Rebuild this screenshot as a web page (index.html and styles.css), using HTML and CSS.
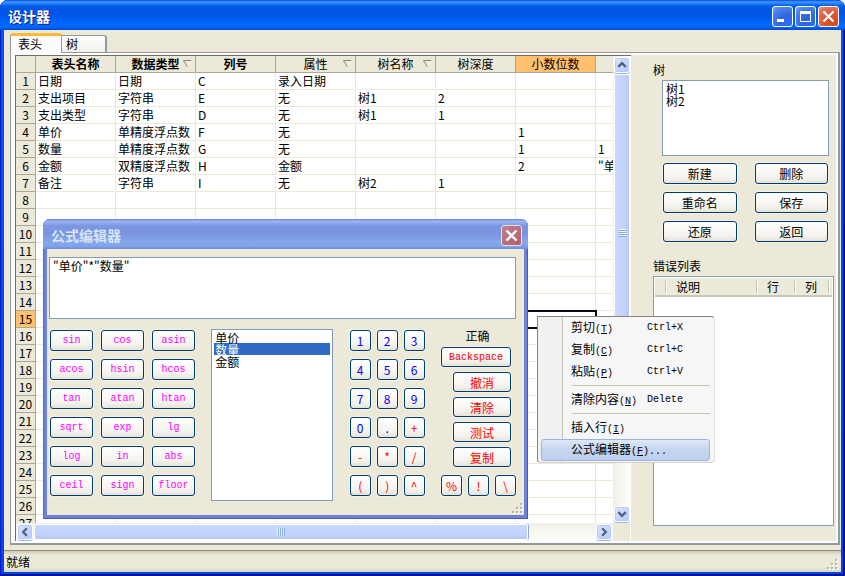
FILE: index.html
```html
<!DOCTYPE html>
<html lang="zh-CN">
<head>
<meta charset="utf-8">
<title>设计器</title>
<link rel="stylesheet" href="styles.css">
</head>
<body>
<main class="window">
  <header class="titlebar">
    <h1 class="caption">设计器</h1>
    <button class="cap-btn" type="button" aria-label="最小化"><svg viewBox="0 0 19 19"><path d="M4 12h7v3H4z" fill="#fff"/></svg></button>
    <button class="cap-btn" type="button" aria-label="最大化"><svg viewBox="0 0 19 19"><path d="M4 4h11v11H4zM5 7v7h9V7z" fill="#fff" fill-rule="evenodd"/></svg></button>
    <button class="cap-btn cap-close" type="button" aria-label="关闭"><svg viewBox="0 0 19 19"><path d="M4.500 4.500l10 10M14.500 4.500l-10 10" stroke="#fff" stroke-width="2.200"/></svg></button>
  </header>

  <div class="client">
    <div class="tabs" role="tablist">
      <button class="tab tab-active" type="button" role="tab" aria-selected="true">表头</button>
      <button class="tab" type="button" role="tab" aria-selected="false">树</button>
    </div>
    <div class="panel">
      <section class="sheet">
        <div class="sheet-main">
          <div class="sheet-view">
            <table class="grid" id="grid">
              <colgroup><col class="col-no"><col><col><col><col><col><col><col><col></colgroup>
              <thead>
                <tr>
                  <th></th>
                  <th class="strong">表头名称</th>
                  <th class="strong"><div class="head"><span>数据类型</span><svg class="filter" viewBox="0 0 9 8"><path d="M8.500.5L4.500 7" stroke="#fff" fill="none"/><path d="M4.500 7L.5.5h8" stroke="#8e8b7c" fill="none"/></svg></div></th>
                  <th class="strong">列号</th>
                  <th><div class="head"><span>属性</span><svg class="filter" viewBox="0 0 9 8"><path d="M8.500.5L4.500 7" stroke="#fff" fill="none"/><path d="M4.500 7L.5.5h8" stroke="#8e8b7c" fill="none"/></svg></div></th>
                  <th><div class="head"><span>树名称</span><svg class="filter" viewBox="0 0 9 8"><path d="M8.500.5L4.500 7" stroke="#fff" fill="none"/><path d="M4.500 7L.5.5h8" stroke="#8e8b7c" fill="none"/></svg></div></th>
                  <th>树深度</th>
                  <th class="hot">小数位数</th>
                  <th></th>
                </tr>
              </thead>
              <tbody>
                <tr><th>1</th><td>日期</td><td>日期</td><td>C</td><td>录入日期</td><td></td><td></td><td></td><td></td></tr>
                <tr><th>2</th><td>支出项目</td><td>字符串</td><td>E</td><td>无</td><td>树1</td><td>2</td><td></td><td></td></tr>
                <tr><th>3</th><td>支出类型</td><td>字符串</td><td>D</td><td>无</td><td>树1</td><td>1</td><td></td><td></td></tr>
                <tr><th>4</th><td>单价</td><td>单精度浮点数</td><td>F</td><td>无</td><td></td><td></td><td>1</td><td></td></tr>
                <tr><th>5</th><td>数量</td><td>单精度浮点数</td><td>G</td><td>无</td><td></td><td></td><td>1</td><td>1</td></tr>
                <tr><th>6</th><td>金额</td><td>双精度浮点数</td><td>H</td><td>金额</td><td></td><td></td><td>2</td><td>"单价"*"数量"</td></tr>
                <tr><th>7</th><td>备注</td><td>字符串</td><td>I</td><td>无</td><td>树2</td><td>1</td><td></td><td></td></tr>
                <tr><th>8</th><td></td><td></td><td></td><td></td><td></td><td></td><td></td><td></td></tr>
                <tr><th>9</th><td></td><td></td><td></td><td></td><td></td><td></td><td></td><td></td></tr>
                <tr><th>10</th><td></td><td></td><td></td><td></td><td></td><td></td><td></td><td></td></tr>
                <tr><th>11</th><td></td><td></td><td></td><td></td><td></td><td></td><td></td><td></td></tr>
                <tr><th>12</th><td></td><td></td><td></td><td></td><td></td><td></td><td></td><td></td></tr>
                <tr><th>13</th><td></td><td></td><td></td><td></td><td></td><td></td><td></td><td></td></tr>
                <tr><th>14</th><td></td><td></td><td></td><td></td><td></td><td></td><td></td><td></td></tr>
                <tr><th class="hot">15</th><td></td><td></td><td></td><td></td><td></td><td></td><td class="current"></td><td></td></tr>
                <tr><th>16</th><td></td><td></td><td></td><td></td><td></td><td></td><td></td><td></td></tr>
                <tr><th>17</th><td></td><td></td><td></td><td></td><td></td><td></td><td></td><td></td></tr>
                <tr><th>18</th><td></td><td></td><td></td><td></td><td></td><td></td><td></td><td></td></tr>
                <tr><th>19</th><td></td><td></td><td></td><td></td><td></td><td></td><td></td><td></td></tr>
                <tr><th>20</th><td></td><td></td><td></td><td></td><td></td><td></td><td></td><td></td></tr>
                <tr><th>21</th><td></td><td></td><td></td><td></td><td></td><td></td><td></td><td></td></tr>
                <tr><th>22</th><td></td><td></td><td></td><td></td><td></td><td></td><td></td><td></td></tr>
                <tr><th>23</th><td></td><td></td><td></td><td></td><td></td><td></td><td></td><td></td></tr>
                <tr><th>24</th><td></td><td></td><td></td><td></td><td></td><td></td><td></td><td></td></tr>
                <tr><th>25</th><td></td><td></td><td></td><td></td><td></td><td></td><td></td><td></td></tr>
                <tr><th>26</th><td></td><td></td><td></td><td></td><td></td><td></td><td></td><td></td></tr>
                <tr><th>27</th><td></td><td></td><td></td><td></td><td></td><td></td><td></td><td></td></tr>
              </tbody>
            </table>
          </div>
          <div class="bar bar-v">
            <button class="arrow" type="button" aria-label="向上滚动"><svg viewBox="0 0 15 15"><path d="M3.500 9.500l4-4 4 4" /></svg></button>
            <div class="track"><div class="thumb"><i class="ridge"></i></div></div>
            <button class="arrow" type="button" aria-label="向下滚动"><svg viewBox="0 0 15 15"><path d="M3.500 5.500l4 4 4-4" /></svg></button>
          </div>
        </div>
        <div class="sheet-foot">
          <div class="bar bar-h">
            <button class="arrow" type="button" aria-label="向左滚动"><svg viewBox="0 0 15 15"><path d="M9.500 3.500l-4 4 4 4" /></svg></button>
            <div class="track"><div class="thumb"><i class="ridge"></i></div></div>
            <button class="arrow" type="button" aria-label="向右滚动"><svg viewBox="0 0 15 15"><path d="M5.500 3.500l4 4-4 4" /></svg></button>
          </div>
          <div class="corner"></div>
        </div>
      </section>

      <aside class="side">
        <label class="side-label" for="trees">树</label>
        <select class="listbox tree-list" id="trees" size="4"><option>树1</option><option>树2</option></select>
        <div class="side-buttons">
          <button class="btn" type="button">新建</button>
          <button class="btn" type="button">删除</button>
          <button class="btn" type="button">重命名</button>
          <button class="btn" type="button">保存</button>
          <button class="btn" type="button">还原</button>
          <button class="btn" type="button">返回</button>
        </div>
        <h2 class="side-label" id="errors">错误列表</h2>
        <div class="errors">
          <table class="error-table" aria-labelledby="errors">
            <thead><tr><th class="c-icon"></th><th class="c-desc">说明</th><th class="c-line">行</th><th class="c-line">列</th><th></th></tr></thead>
          </table>
        </div>
      </aside>
    </div>
  </div>

  <footer class="status">
    <span>就绪</span>
    <svg class="grip" viewBox="0 0 12 12"><path d="M9 1h2v2H9zM5 5h2v2H5zM9 5h2v2H9zM1 9h2v2H1zM5 9h2v2H5zM9 9h2v2H9z" fill="#fff"/><path d="M8 0h2v2H8zM4 4h2v2H4zM8 4h2v2H8zM0 8h2v2H0zM4 8h2v2H4zM8 8h2v2H8z" fill="#b8b4a2"/></svg>
  </footer>

  <section class="dialog" role="dialog" aria-labelledby="dlg-title">
    <header class="dlg-title">
      <h2 class="caption" id="dlg-title">公式编辑器</h2>
      <button class="cap-btn dlg-close" type="button" aria-label="关闭"><svg viewBox="0 0 19 19"><path d="M4.500 4.500l10 10M14.500 4.500l-10 10" stroke="#fff" stroke-width="2.400"/></svg></button>
    </header>
    <div class="dlg-body">
      <textarea class="formula" aria-label="公式" spellcheck="false">"单价"*"数量"</textarea>
      <div class="dlg-cols">
        <div class="keys keys-fn">
          <button class="btn fn" type="button">sin</button><button class="btn fn" type="button">cos</button><button class="btn fn" type="button">asin</button>
          <button class="btn fn" type="button">acos</button><button class="btn fn" type="button">hsin</button><button class="btn fn" type="button">hcos</button>
          <button class="btn fn" type="button">tan</button><button class="btn fn" type="button">atan</button><button class="btn fn" type="button">htan</button>
          <button class="btn fn" type="button">sqrt</button><button class="btn fn" type="button">exp</button><button class="btn fn" type="button">lg</button>
          <button class="btn fn" type="button">log</button><button class="btn fn" type="button">in</button><button class="btn fn" type="button">abs</button>
          <button class="btn fn" type="button">ceil</button><button class="btn fn" type="button">sign</button><button class="btn fn" type="button">floor</button>
        </div>
        <select class="listbox field-list" size="6" aria-label="字段"><option>单价</option><option selected>数量</option><option>金额</option></select>
        <div class="keys keys-num">
          <button class="btn num" type="button">1</button><button class="btn num" type="button">2</button><button class="btn num" type="button">3</button>
          <button class="btn num" type="button">4</button><button class="btn num" type="button">5</button><button class="btn num" type="button">6</button>
          <button class="btn num" type="button">7</button><button class="btn num" type="button">8</button><button class="btn num" type="button">9</button>
          <button class="btn num" type="button">0</button><button class="btn num" type="button">.</button><button class="btn op" type="button">+</button>
          <button class="btn op" type="button">-</button><button class="btn op" type="button">*</button><button class="btn op" type="button">/</button>
          <button class="btn op" type="button">(</button><button class="btn op" type="button">)</button><button class="btn op" type="button">^</button>
        </div>
        <div class="actions">
          <div class="stack">
            <output class="check">正确</output>
            <button class="btn op wide mono" type="button">Backspace</button>
            <button class="btn op" type="button">撤消</button>
            <button class="btn op" type="button">清除</button>
            <button class="btn op" type="button">测试</button>
            <button class="btn op" type="button">复制</button>
          </div>
          <div class="keys keys-num">
            <button class="btn op" type="button">%</button><button class="btn op" type="button">!</button><button class="btn op" type="button">\</button>
          </div>
        </div>
      </div>
      <svg class="grip dlg-grip" viewBox="0 0 12 12"><path d="M9 1h2v2H9zM5 5h2v2H5zM9 5h2v2H9zM1 9h2v2H1zM5 9h2v2H5zM9 9h2v2H9z" fill="#fff"/><path d="M8 0h2v2H8zM4 4h2v2H4zM8 4h2v2H8zM0 8h2v2H0zM4 8h2v2H4zM8 8h2v2H8z" fill="#b8b4a2"/></svg>
    </div>
  </section>

  <div class="menu" role="menu">
    <button class="item" type="button" role="menuitem"><span>剪切<span class="key">(<u>T</u>)</span></span><kbd>Ctrl+X</kbd></button>
    <button class="item" type="button" role="menuitem"><span>复制<span class="key">(<u>C</u>)</span></span><kbd>Ctrl+C</kbd></button>
    <button class="item" type="button" role="menuitem"><span>粘贴<span class="key">(<u>P</u>)</span></span><kbd>Ctrl+V</kbd></button>
    <hr class="sep">
    <button class="item" type="button" role="menuitem"><span>清除内容<span class="key">(<u>N</u>)</span></span><kbd>Delete</kbd></button>
    <hr class="sep">
    <button class="item" type="button" role="menuitem"><span>插入行<span class="key">(<u>I</u>)</span></span></button>
    <button class="item item-on" type="button" role="menuitem"><span>公式编辑器<span class="key">(<u>F</u>)...</span></span></button>
  </div>
</main>
</body>
</html>
```
FILE: styles.css
```css
* { box-sizing: border-box; }

body {
  margin: 0;
  background: #fff;
  color: #000;
  font: 12px/16px "Noto Sans CJK SC", sans-serif;
}

button, select, textarea { font: inherit; color: inherit; margin: 0; }
h1, h2 { margin: 0; font-weight: normal; font-size: 12px; }
svg { display: block; }

/* main window */
.window {
  position: relative;
  display: flex;
  flex-direction: column;
  height: 100vh;
  padding: 0 4px 4px;
  overflow: hidden;
  border-radius: 8px 8px 0 0;
  background: linear-gradient(#0058ee, #0046e0);
  box-shadow: inset 1px 0 #0019cf, inset -2px 0 #00138c, inset 0 -2px #001690;
}

.titlebar {
  display: flex;
  flex: none;
  align-items: center;
  gap: 2px;
  height: 30px;
  margin: 0 -4px;
  padding: 2px 6px 0 8px;
  background: linear-gradient(#0a45d8 0, #3d95ff 6%, #2a86fc 11%, #0562ea 18%, #0054e3 32%, #0056e8 52%, #0066fe 76%, #0068ff 90%, #0048d0 100%);
}

.caption {
  flex: 1;
  color: #fff;
  font-size: 14px;
  line-height: 20px;
  font-weight: bold;
}

.titlebar .caption { text-shadow: 1px 1px #0a1f80; }

.cap-btn {
  width: 21px;
  height: 21px;
  padding: 0;
  border: 1px solid #fff;
  border-radius: 3px;
  background: radial-gradient(circle at 80% 90%, #2a6ef0, #2f66e0 40%, #4f84ee 80%, #83a8f4);
}

.cap-close { background: radial-gradient(circle at 80% 90%, #d64a1c, #dc5532 45%, #e87e62 90%); }

.client {
  display: flex;
  flex: 1;
  flex-direction: column;
  min-height: 0;
  padding: 3px 1px 5px 6px;
  background: #ece9d8;
}

.tabs {
  display: flex;
  flex: none;
  align-items: flex-end;
  height: 19px;
}

.tab {
  height: 17px;
  padding: 0 27px 0 4px;
  border: 1px solid #919b9c;
  border-width: 1px 2px 0 0;
  border-radius: 0 3px 0 0;
  background: linear-gradient(#fff, #f0f0ea);
  line-height: 16px;
}

.tab-active {
  position: relative;
  z-index: 1;
  height: 20px;
  margin-bottom: -1px;
  padding: 0 19px 2px 7px;
  border-width: 3px 1px 0 1px;
  border-top-color: #ffb83a;
  border-radius: 3px 3px 0 0;
  background: #fcfcfe;
  line-height: 14px;
}

.panel {
  display: flex;
  flex: 1;
  min-height: 0;
  padding: 2px 2px 2px 4px;
  border: 1px solid #919b9c;
  border-right-width: 2px;
  border-bottom-width: 2px;
  background: #fcfcfe;
}

/* spreadsheet */
.sheet {
  display: flex;
  flex: 1;
  flex-direction: column;
  min-width: 0;
  border: 1px solid #716f64;
  border-width: 1px 0 0 1px;
}

.sheet-main { display: flex; flex: 1; min-height: 0; }

.sheet-view {
  flex: 1;
  min-width: 0;
  overflow: hidden;
  background: #fff;
}

.grid {
  width: 660px;
  border-collapse: separate;
  border-spacing: 0;
  table-layout: fixed;
}

.grid col { width: 80px; }
.grid .col-no { width: 20px; }

.grid th, .grid td {
  height: 17px;
  padding: 0 2px;
  border: solid #ece9d8;
  border-width: 0 1px 1px 0;
  line-height: 16px;
  text-align: left;
  white-space: nowrap;
}

.grid th {
  padding: 0;
  border-color: #aca899;
  background: #ece9d8;
  font-weight: normal;
  text-align: center;
}

.grid .strong { font-weight: bold; }
.grid .hot { background: #ffc06f; }
.grid .current { outline: 2px solid #0a0a14; outline-offset: -1px; }

.head {
  display: grid;
  grid-template-columns: 1fr auto 1fr;
  align-items: center;
}

.head span { grid-column: 2; }
.filter { width: 9px; height: 8px; margin-right: 3px; justify-self: end; }

/* scroll bars */
.sheet-foot { display: flex; flex: none; height: 18px; }
.corner { width: 18px; background: #ece9d8; border-right: 1px solid #fff; }
.bar { display: flex; padding: 1px; }
.bar-v { flex-direction: column; width: 18px; background: linear-gradient(90deg, #f0efe8, #fefefb); }
.bar-h { flex: 1; background: linear-gradient(#f0efe8, #fefefb); }

.arrow {
  flex: none;
  width: 16px;
  height: 16px;
  padding: 0;
  border: 1px solid #fff;
  border-radius: 3px;
  background: linear-gradient(135deg, #dce6ff, #b4c8f8);
  box-shadow: inset 0 0 0 1px #b8cbf6, 0 1px #9db5e4;
}

.arrow path { fill: none; stroke: #4d6185; stroke-width: 2.4; }
.track { display: flex; flex: 1; }
.bar-v .track { flex-direction: column; padding: 1px 0; }
.bar-h .track { padding: 0 1px; }

.thumb {
  display: flex;
  align-items: center;
  justify-content: center;
  border: 1px solid #fff;
  border-radius: 2px;
}

.bar-v .thumb { height: 74%; background: linear-gradient(90deg, #c9d8ff, #c2d2fc 70%, #b4c6f6); box-shadow: 0 1px #8fa8d8; }
.bar-h .thumb { width: 88%; background: linear-gradient(#c9d8ff, #c2d2fc 70%, #b4c6f6); box-shadow: 1px 0 #8fa8d8; }
.ridge { width: 8px; height: 8px; }
.bar-v .ridge { background: repeating-linear-gradient(#eef4fe 0 1px, #8cb0f8 1px 2px); }
.bar-h .ridge { background: repeating-linear-gradient(90deg, #eef4fe 0 1px, #8cb0f8 1px 2px); }

/* right column */
.side {
  display: flex;
  flex: none;
  flex-direction: column;
  width: 205px;
  padding: 7px 2px 15px 22px;
  background: #ece9d8;
}

.side-label { display: block; flex: none; line-height: 16px; }

.listbox {
  display: block;
  padding: 1px 2px;
  border: 1px solid #7f9db9;
  border-radius: 0;
  outline: 0;
  overflow: hidden;
  background: #fff;
}

.listbox option {
  display: flex;
  align-items: center;
  height: 12px;
  min-height: 12px;
  padding: 0 1px;
  overflow: visible;
}

.listbox option:checked { background: #316ac5 linear-gradient(#316ac5, #316ac5); color: #fff; }
.tree-list { flex: none; height: 76px; margin: 2px 5px 7px 9px; }

.side-buttons {
  display: grid;
  grid-template-columns: 1fr 1fr;
  gap: 8px 18px;
  margin: 0 6px 16px 10px;
}

.btn {
  height: 21px;
  padding: 0;
  border: 1px solid #003c74;
  border-radius: 3px;
  background: linear-gradient(#fff, #f4f3ee 70%, #e6e3d8);
  box-shadow: 0 0 0 1px #f4f2e8;
  line-height: 17px;
  text-align: center;
}

.errors {
  flex: 1;
  margin-top: 2px;
  padding: 1px;
  border: 1px solid #7f9db9;
  background: #fff;
}

.error-table {
  width: 100%;
  border-collapse: separate;
  border-spacing: 0;
  table-layout: fixed;
}

.error-table th {
  height: 19px;
  padding: 0 0 0 9px;
  border-bottom: 2px solid #cbc7b8;
  background: linear-gradient(90deg, #fff, #fff) right center / 1px 13px no-repeat,
    linear-gradient(90deg, #c7c5b2, #c7c5b2) right 1px center / 1px 13px no-repeat, #ebeadb;
  font-weight: normal;
  line-height: 17px;
  text-align: left;
}

.error-table .c-icon { width: 12px; }
.error-table .c-desc { width: 91px; }
.error-table .c-line { width: 38px; }
.error-table th:nth-child(4) { width: 34px; }
.error-table th:last-child { background: #ebeadb; }

.status {
  display: flex;
  flex: none;
  align-items: center;
  justify-content: space-between;
  height: 22px;
  padding: 0 2px;
  border-top: 1px solid #919078;
  background: linear-gradient(#c9c6b4, #ece9d8 4px, #ece9d8 80%, #d8d4c0);
}

.grip { width: 12px; height: 12px; }
.status .grip { align-self: flex-end; margin-bottom: 1px; }

/* formula dialog */
.dialog {
  position: absolute;
  left: 43px;
  top: 219px;
  width: 485px;
  padding: 0 4px 4px;
  border-radius: 7px 7px 0 0;
  background: #6f82da;
  box-shadow: inset 1px 0 #5b68cc, inset -1px -1px #4f54b8;
  overflow: hidden;
}

.dlg-title {
  display: flex;
  align-items: center;
  height: 30px;
  margin: 0 -4px;
  padding: 2px 6px 0 8px;
  background: linear-gradient(#6b86dc, #9ab5f0 8%, #7d98e2 22%, #7a94e0 45%, #82a8ea 78%, #82a4ea 90%, #7288dc);
}

.dlg-title .caption { color: #d8e4f8; }
.dlg-close { border-color: #e4e0f0; background: linear-gradient(135deg, #c08090, #b0606c); }

.dlg-body {
  position: relative;
  padding: 8px 8px 14px 2px;
  background: #ece9d8;
}

.formula {
  display: block;
  width: 100%;
  height: 62px;
  padding: 0 3px;
  border: 1px solid #7f9db9;
  border-radius: 0;
  outline: 0;
  resize: none;
  overflow: hidden;
  background: #fff;
}

.dlg-cols {
  display: flex;
  justify-content: space-between;
  padding: 10px 0 0 1px;
}

.keys { display: grid; align-content: start; padding-top: 1px; }
.keys-fn { grid-template-columns: repeat(3, 43px); gap: 8px; }
.keys-num { grid-template-columns: repeat(3, 21px); gap: 8px 6px; }
.fn { color: #f0f; }
.num { color: #00f; }
.op { color: #f00; }
.fn, .mono { font-family: "Liberation Mono", monospace; font-size: 10px; }
.field-list { width: 122px; height: 172px; }

.actions {
  display: flex;
  flex-direction: column;
  justify-content: space-between;
  padding-bottom: 5px;
}

.stack {
  display: flex;
  flex-direction: column;
  align-items: flex-end;
  gap: 5px;
  padding-right: 5px;
}

.stack .btn { width: 58px; height: 20px; }
.stack .wide { width: 70px; }
.check { width: 70px; height: 13px; line-height: 13px; padding-left: 3px; text-align: center; }
.dlg-grip { position: absolute; right: 0; bottom: 0; }

/* context menu */
.menu {
  position: absolute;
  left: 537px;
  top: 316px;
  width: 178px;
  padding: 0 4px 1px 3px;
  border: 1px solid #8a867a;
  border-color: #8a867a #e4e2da #d4d2c8 #8a867a;
  border-radius: 0 4px 4px 3px;
  background: linear-gradient(90deg, #f1f1f1 24px, #c5c5b8 24px 25px, #f6f6f6 25px);
}

.item {
  display: grid;
  grid-template-columns: 76px 1fr;
  align-items: center;
  width: 100%;
  height: 22px;
  padding: 0 0 0 29px;
  border: 1px solid transparent;
  border-radius: 3px;
  background: none;
  text-align: left;
  white-space: nowrap;
}

.item-on {
  border-color: #98b5e2;
  background: linear-gradient(#dfe8f6, #c6d6f0 45%, #bed0ee);
}

.key, kbd { font-family: "Liberation Mono", monospace; font-size: 10px; }

.sep {
  height: 1px;
  margin: 2px 0 3px 31px;
  border: 0;
  background: #c5c5b4;
}
```
